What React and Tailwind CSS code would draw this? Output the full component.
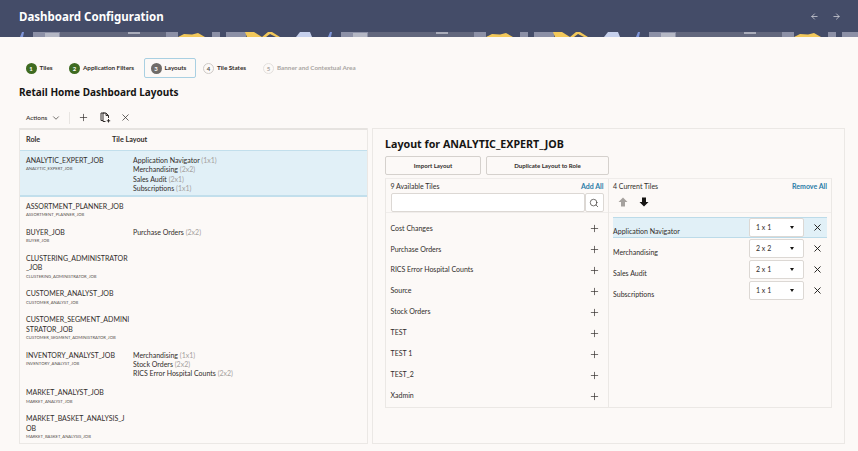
import { Search, Plus, X, ChevronDown, ArrowLeft, ArrowRight } from "lucide-react";

const roles = [
  { lines: ["ASSORTMENT_PLANNER_JOB"], sub: "ASSORTMENT_PLANNER_JOB", tiles: [] },
  { lines: ["BUYER_JOB"], sub: "BUYER_JOB", tiles: [["Purchase Orders", "2x2"]] },
  { lines: ["CLUSTERING_ADMINISTRATOR", "_JOB"], sub: "CLUSTERING_ADMINISTRATOR_JOB", tiles: [] },
  { lines: ["CUSTOMER_ANALYST_JOB"], sub: "CUSTOMER_ANALYST_JOB", tiles: [] },
  { lines: ["CUSTOMER_SEGMENT_ADMINI", "STRATOR_JOB"], sub: "CUSTOMER_SEGMENT_ADMINISTRATOR_JOB", tiles: [] },
  {
    lines: ["INVENTORY_ANALYST_JOB"],
    sub: "INVENTORY_ANALYST_JOB",
    tiles: [["Merchandising", "1x1"], ["Stock Orders", "2x2"], ["RICS Error Hospital Counts", "2x2"]],
  },
  { lines: ["MARKET_ANALYST_JOB"], sub: "MARKET_ANALYST_JOB", tiles: [] },
  { lines: ["MARKET_BASKET_ANALYSIS_J", "OB"], sub: "MARKET_BASKET_ANALYSIS_JOB", tiles: [] },
];

const available = ["Cost Changes", "Purchase Orders", "RICS Error Hospital Counts", "Source", "Stock Orders", "TEST", "TEST 1", "TEST_2", "Xadmin"];

const current = [
  ["Application Navigator", "1 x 1"],
  ["Merchandising", "2 x 2"],
  ["Sales Audit", "2 x 1"],
  ["Subscriptions", "1 x 1"],
];

const Banner = () => (
  <svg width="858" height="5" className="block" viewBox="0 0 858 5">
    <rect width="858" height="5" fill="#444c68" />
    {[0, 308, 616].map((o) => (
      <g key={o} transform={`translate(${o} 0)`}>
        <path d="M20 5 L22 0 H24 L23 5Z" fill="#7f95d8" />
        <rect x="33" width="27" height="5" fill="#8c90a6" />
        <rect x="45" y="1" width="14" height="4" fill="#b4b7c4" />
        <rect x="60" width="106" height="5" fill="#62677d" />
        <rect x="128" y="0" width="12" height="2" fill="#a9acba" />
        <rect x="166" width="12" height="5" fill="#8c90a6" />
        <path d="M178 5 L184 2 L192 2.5 L198 1 L205 5Z" fill="#f2c85b" />
        <rect x="212" width="8" height="5" fill="#8c90a6" />
        <rect x="226" width="20" height="5" fill="#8c90a6" />
        <path d="M245 0 H254 L262 5 H247Z" fill="#f2c85b" />
        <path d="M262 5 L268 0 H272 L280 5H276 L270 2 L266 5Z" fill="#f2c85b" />
        <path d="M296 5 L300 0 H310 L312 5Z" fill="#c6d0ec" />
      </g>
    ))}
  </svg>
);

const Step = ({ n, label, state, className }) => {
  const circle =
    state === "done"
      ? "bg-[#3f6b21] text-white"
      : state === "active"
        ? "bg-[#6f6b68] text-white"
        : state === "next"
          ? "border border-[#cfcbc7] text-[#55504c]"
          : "border border-[#e4e1de] text-[#aaa6a3]";
  const text = state === "off" ? "text-[#a9a5a2]" : "text-[#312d2a]";
  return (
    <div className={`flex items-center gap-[3px] shrink-0 ${className}`}>
      <span className={`w-[11px] h-[11px] rounded-full flex items-center justify-center text-[6px] font-bold shrink-0 ${circle}`}>{n}</span>
      <span className={`text-[6.3px] font-bold whitespace-nowrap ${text}`}>{label}</span>
    </div>
  );
};

const TileLine = ({ name, size }) => (
  <div className="h-[9.25px] leading-[9.25px] whitespace-nowrap">
    {name} <span className="text-[#a5a19e]">({size})</span>
  </div>
);

const RoleCell = ({ lines, sub }) => (
  <div className="w-[107px] shrink-0 whitespace-nowrap">
    {lines.map((l) => (
      <div key={l} className="h-[9.25px] leading-[9.25px]">{l}</div>
    ))}
    <div className="h-[6.75px] leading-[7px] text-[4.2px] text-[#55504c]">{sub}</div>
  </div>
);

const CopyTile = () => (
  <svg width="11" height="11" viewBox="0 0 11 11" fill="none" stroke="#312d2a" strokeWidth="1" className="ml-[11px]">
    <path d="M3 8.5H1V1H4.5" />
    <path d="M3 1H6L8.5 3.5V6M3 1V9.5H5.5" />
    <path d="M6 1V3.5H8.5" />
    <path d="M8.5 7V10.5M6.8 8.8H10.2" />
  </svg>
);

const BlockArrow = ({ up, color }) => (
  <svg width="10" height="10" viewBox="0 0 10 10" fill={color}>
    <path d={up ? "M5 0.5L9.5 5H7V9.5H3V5H0.5Z" : "M5 9.5L9.5 5H7V0.5H3V5H0.5Z"} />
  </svg>
);

export default function App() {
  return (
    <div className="w-[858px] h-[451px] overflow-hidden bg-[#fcf9f7] text-[#312d2a] font-['Lato',sans-serif]">
      <header className="h-[32px] bg-[#444c68] flex items-center justify-between pl-[19px] pr-[17px]">
        <h1 className="text-[11.5px] mt-[1px] font-bold text-white font-['Noto_Sans',sans-serif]">Dashboard Configuration</h1>
        <div className="flex items-center gap-[13px] text-[#d6d6dc]">
          <ArrowLeft size={9} strokeWidth={2} />
          <ArrowRight size={9} strokeWidth={2} />
        </div>
      </header>
      <Banner />

      <div className="h-[20px] mt-[21px] pl-[25.5px] flex items-center">
        <Step n="1" label="Tiles" state="done" className="w-[43.5px]" />
        <Step n="2" label="Application Filters" state="done" className="w-[75px]" />
        <Step n="3" label="Layouts" state="active" className="w-[52px] h-[20px] px-[5.5px] border border-[#a9d0e2] rounded-[2px]" />
        <Step n="4" label="Tile States" state="next" className="w-[60px] ml-[7px]" />
        <Step n="5" label="Banner and Contextual Area" state="off" className="w-[100px]" />
      </div>

      <h2 className="pl-[19px] mt-[7px] h-[14px] leading-[14px] text-[10px] font-bold text-[#161513] font-['Noto_Sans',sans-serif]">Retail Home Dashboard Layouts</h2>

      <div className="mt-[11px] h-[15px] pl-[26px] flex items-center text-[#312d2a]">
        <span className="text-[6.4px] font-medium w-[25px]">Actions</span>
        <ChevronDown size={10} strokeWidth={1.6} />
        <div className="w-px h-[12px] bg-[#e8e5e2] ml-[8px]" />
        <Plus size={11} strokeWidth={1.5} className="ml-[8px]" />
        <CopyTile />
        <X size={11} strokeWidth={1.6} className="ml-[9px]" />
      </div>

      <div className="flex items-start mt-[3px] ml-[19px]">
        <section className="w-[349px] h-[316px] border border-t-0 border-[#ebe8e5] text-[7px]">
          <div className="h-[22px] border-t-2 border-[#e6e3e0] flex items-center pl-[6px] font-bold text-[7.2px] text-[#312d2a]">
            <div className="w-[86px]">Role</div>
            <div>Tile Layout</div>
          </div>
          <div className="h-[47px] bg-[#e1f0f7] border-t border-b-2 border-[#c2dfec] pl-[6px] pt-[5px] flex">
            <RoleCell lines={["ANALYTIC_EXPERT_JOB"]} sub="ANALYTIC_EXPERT_JOB" />
            <div>
              <TileLine name="Application Navigator" size="1x1" />
              <TileLine name="Merchandising" size="2x2" />
              <TileLine name="Sales Audit" size="2x1" />
              <TileLine name="Subscriptions" size="1x1" />
            </div>
          </div>
          {roles.map((r) => (
            <div key={r.sub} className="pl-[6px] py-[5px] flex">
              <RoleCell lines={r.lines} sub={r.sub} />
              <div>
                {r.tiles.map(([name, size]) => (
                  <TileLine key={name} name={name} size={size} />
                ))}
              </div>
            </div>
          ))}
        </section>

        <section className="w-[473px] h-[316px] ml-[4px] border border-[#ebe8e5] pl-[12px] pt-[8px]">
          <h3 className="text-[10.7px] font-bold leading-[14px] h-[14px] text-[#161513] font-['Noto_Sans',sans-serif]">Layout for ANALYTIC_EXPERT_JOB</h3>
          <div className="flex gap-[5px] mt-[5px] text-[6.1px] font-bold">
            <button className="w-[96px] h-[19px] border border-[#d5d1cd] rounded-[2px]">Import Layout</button>
            <button className="w-[123px] h-[19px] border border-[#d5d1cd] rounded-[2px]">Duplicate Layout to Role</button>
          </div>
          <div className="flex w-[447px] h-[230px] mt-[3px] border border-t-[#efecea] border-[#ebe8e5] text-[7px]">
            <div className="w-[223px] border-r border-[#ebe8e5]">
              <div className="h-[34px] border-b border-[#f0edeb] px-[4.5px]">
                <div className="flex justify-between h-[14px] pt-[1px] items-center">
                  <span>9 Available Tiles</span>
                  <span className="text-[#2a7ca8] font-bold">Add All</span>
                </div>
                <div className="flex">
                  <div className="w-[195px] h-[19px] bg-white border border-[#dcd8d4] rounded-[2px]" />
                  <div className="w-[19px] h-[19px] bg-white border border-[#dcd8d4] rounded-[2px] flex items-center justify-center">
                    <Search size={10} strokeWidth={1.6} />
                  </div>
                </div>
              </div>
              <div className="pt-[5px] pl-[4.5px] pr-[8px]">
                {available.map((t) => (
                  <div key={t} className="h-[20.9px] flex items-center justify-between">
                    <span className="-mt-[1px]">{t}</span>
                    <Plus size={11} strokeWidth={1.5} className="mt-[1px]" />
                  </div>
                ))}
              </div>
            </div>
            <div className="flex-1">
              <div className="h-[34px] border-b border-[#f0edeb] px-[4px]">
                <div className="flex justify-between h-[14px] pt-[1px] items-center">
                  <span>4 Current Tiles</span>
                  <span className="text-[#2a7ca8] font-bold">Remove All</span>
                </div>
                <div className="flex gap-[11px] items-center pl-[5px] mt-[4px]">
                  <BlockArrow up color="#a5a19e" />
                  <BlockArrow color="#161513" />
                </div>
              </div>
              <div className="pt-[4px] px-[4px]">
                {current.map(([name, size], i) => (
                  <div key={name} className={`h-[20.9px] flex items-end ${i === 0 ? "bg-[#e1f0f7] shadow-[inset_0_1px_0_#bcdbe9,inset_0_-1px_0_#bcdbe9]" : ""}`}>
                    <span className="w-[136px] leading-[11px] mb-[0.5px]">{name}</span>
                    <div className="w-[55px] h-[18.5px] mb-[1px] bg-white border border-[#dcd8d4] rounded-[2px] flex items-center justify-between pl-[6px] pr-[9px]">
                      <span>{size}</span>
                      <span className="w-0 h-0 border-x-[2.5px] border-x-transparent border-t-[3px] border-t-[#161513]" />
                    </div>
                    <div className="ml-[8px] h-[19px] flex items-center mb-[1px]">
                      <X size={11} strokeWidth={2} className="text-[#161513]" />
                    </div>
                  </div>
                ))}
              </div>
            </div>
          </div>
        </section>
      </div>
    </div>
  );
}
